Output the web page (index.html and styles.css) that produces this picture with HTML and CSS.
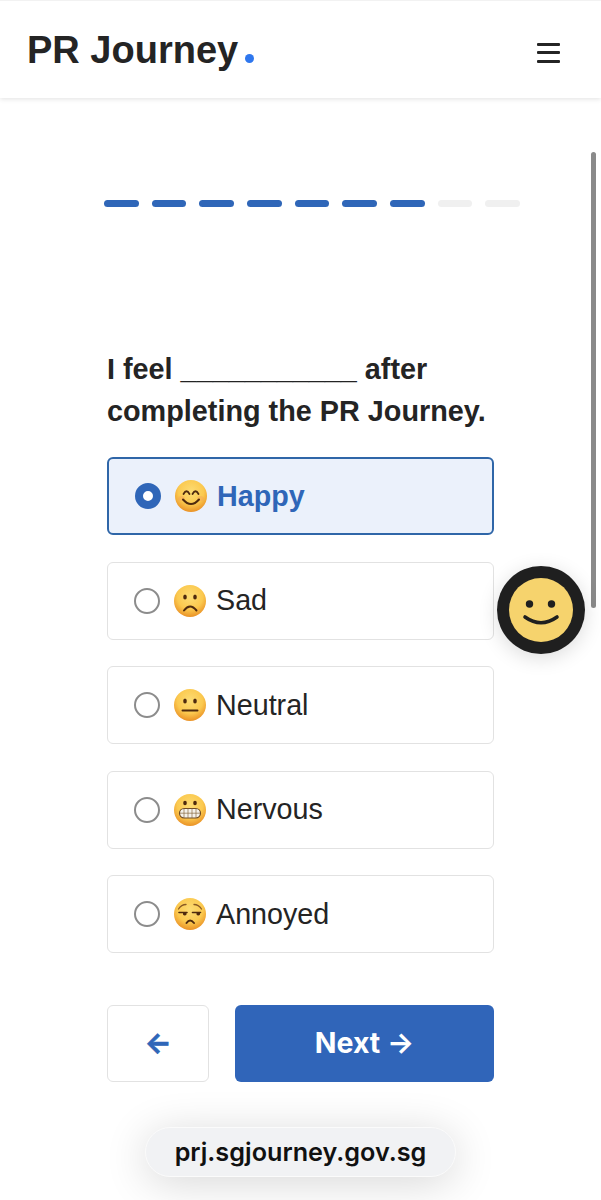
FILE: index.html
```html
<!DOCTYPE html>
<html lang="en">

<head>
  <meta charset="UTF-8">
  <meta name="viewport" content="width=device-width, initial-scale=1.0">
  <title>PR Journey</title>
  <link rel="stylesheet" href="styles.css">
</head>

<body>
  <svg class="defs" width="0" height="0" aria-hidden="true">
    <defs>
      <radialGradient id="face" cx="50%" cy="36%" r="64%">
        <stop offset="0" stop-color="#fcdc74" />
        <stop offset="0.62" stop-color="#fbc94f" />
        <stop offset="1" stop-color="#ea9226" />
      </radialGradient>
    </defs>
  </svg>

  <header class="topbar">
    <div class="logo">PR Journey<span class="logo-dot"></span></div>
    <div class="burger"><span></span><span></span><span></span></div>
  </header>

  <main class="content">
    <div class="progress">
      <span class="step done"></span>
      <span class="step done"></span>
      <span class="step done"></span>
      <span class="step done"></span>
      <span class="step done"></span>
      <span class="step done"></span>
      <span class="step done"></span>
      <span class="step"></span>
      <span class="step"></span>
    </div>

    <h1 class="question">I feel ___________ after completing the PR Journey.</h1>

    <div class="options">
      <label class="option selected">
        <span class="radio"></span>
        <svg class="emoji" viewBox="0 0 32 32">
          <circle cx="16" cy="16" r="16" fill="url(#face)" />
          <ellipse cx="6.500" cy="18.500" rx="3.500" ry="2.500" fill="#f5a35c" opacity="0.450" />
          <ellipse cx="25.500" cy="18.500" rx="3.500" ry="2.500" fill="#f5a35c" opacity="0.450" />
          <path d="M8.500 14q3-5.500 6 0M17.500 14q3-5.500 6 0" fill="none" stroke="#4e2a0e" stroke-width="1.800" stroke-linecap="round" />
          <path d="M8 19.500q8 9 16 0" fill="none" stroke="#4e2a0e" stroke-width="2" stroke-linecap="round" />
        </svg>
        <span>Happy</span>
      </label>
      <label class="option">
        <span class="radio"></span>
        <svg class="emoji" viewBox="0 0 32 32">
          <circle cx="16" cy="16" r="16" fill="url(#face)" />
          <ellipse cx="11" cy="12" rx="1.800" ry="2.500" fill="#4e2a0e" />
          <ellipse cx="21" cy="12" rx="1.800" ry="2.500" fill="#4e2a0e" />
          <path d="M10 25.500q6-8 12.500 0" fill="none" stroke="#4e2a0e" stroke-width="2" stroke-linecap="round" />
        </svg>
        <span>Sad</span>
      </label>
      <label class="option">
        <span class="radio"></span>
        <svg class="emoji" viewBox="0 0 32 32">
          <circle cx="16" cy="16" r="16" fill="url(#face)" />
          <ellipse cx="11" cy="12" rx="1.800" ry="2.500" fill="#4e2a0e" />
          <ellipse cx="21" cy="12" rx="1.800" ry="2.500" fill="#4e2a0e" />
          <path d="M8.500 21.500h15" fill="none" stroke="#4e2a0e" stroke-width="2" stroke-linecap="round" />
        </svg>
        <span>Neutral</span>
      </label>
      <label class="option">
        <span class="radio"></span>
        <svg class="emoji" viewBox="0 0 32 32">
          <circle cx="16" cy="16" r="16" fill="url(#face)" />
          <ellipse cx="11" cy="9" rx="1.800" ry="2.200" fill="#4e2a0e" />
          <ellipse cx="21" cy="9" rx="1.800" ry="2.200" fill="#4e2a0e" />
          <rect x="5.500" y="14.500" width="21" height="9.500" rx="4.700" fill="#f4f1ea" stroke="#6e4a24" stroke-width="1.200" />
          <path d="M6 19.200h20M10 14.500v9.500M14 14.500v9.500M18 14.500v9.500M22 14.500v9.500" fill="none" stroke="#8a6a42" stroke-width="0.700" />
        </svg>
        <span>Nervous</span>
      </label>
      <label class="option">
        <span class="radio"></span>
        <svg class="emoji" viewBox="0 0 32 32">
          <circle cx="16" cy="16" r="16" fill="url(#face)" />
          <path d="M4.500 11q3-4.500 7.500-4.500M20 6.500q4.500 0 7.500 4.500" fill="none" stroke="#8a5a24" stroke-width="1.300" stroke-linecap="round" />
          <path d="M5 14.500h8M18.500 14.500h8" fill="none" stroke="#4e2a0e" stroke-width="1.600" stroke-linecap="round" />
          <path d="M9 15v1.500a2 2 0 0 0 3.500 0v-1.500zM22.500 15v1.500a2 2 0 0 0 3.500 0v-1.500z" fill="#4e2a0e" />
          <path d="M12.500 25q3.500-5 7.500 0" fill="none" stroke="#4e2a0e" stroke-width="2" stroke-linecap="round" />
        </svg>
        <span>Annoyed</span>
      </label>
    </div>

    <div class="actions">
      <button class="btn-back" type="button">←</button>
      <button class="btn-next" type="button">Next →</button>
    </div>
  </main>

  <div class="scroll-thumb"></div>

  <button class="feedback" type="button">
    <svg viewBox="0 0 64 64" width="64" height="64">
      <circle cx="32" cy="32" r="32" fill="#f6d36d" />
      <circle cx="20.500" cy="26" r="3.700" fill="#1f1f1f" />
      <circle cx="42.500" cy="26" r="3.700" fill="#1f1f1f" />
      <path d="M16 39q16 11.500 32 0" fill="none" stroke="#1f1f1f" stroke-width="3.600" stroke-linecap="round" />
    </svg>
  </button>

  <div class="url-pill">prj.sgjourney.gov.sg</div>
</body>

</html>
```

FILE: styles.css
```css
* {
  box-sizing: border-box;
}

html,
body {
  height: 1200px;
  overflow: hidden;
}

body {
  margin: 0;
  padding: 0;
  background: #ffffff;
  color: #242424;
  font-family: "Liberation Sans", Arial, sans-serif;
}

.defs {
  position: absolute;
}

.topbar {
  height: 98px;
  padding: 0 41px 0 27px;
  display: flex;
  justify-content: space-between;
  align-items: center;
  border-top: 1px solid #f2f2f2;
  box-shadow: 0 1px 5px rgba(0, 0, 0, 0.12);
}

.logo {
  font-size: 38px;
  font-weight: 700;
  line-height: 44px;
}

.logo-dot {
  display: inline-block;
  width: 9px;
  height: 9px;
  margin-left: 7px;
  border-radius: 50%;
  background: #2f77ee;
}

.burger {
  width: 23px;
  display: flex;
  flex-direction: column;
  gap: 5.500px;
  margin-top: 6px;
}

.burger span {
  height: 3px;
  border-radius: 1px;
  background: #242424;
}

.content {
  padding: 102px 107px 0;
}

.progress {
  width: 416px;
  margin-left: -3px;
  display: flex;
  gap: 13px;
}

.step {
  flex: 1;
  height: 7px;
  border-radius: 4px;
  background: #f0f0f0;
}

.step.done {
  background: #2f66b8;
}

.question {
  margin: 141px 0 0;
  font-size: 28.800px;
  font-weight: 700;
  line-height: 42px;
}

.options {
  margin-top: 25px;
  display: flex;
  flex-direction: column;
  gap: 26.500px;
}

.option {
  height: 78px;
  padding-left: 26px;
  display: flex;
  align-items: center;
  border: 1.500px solid #e2e2e2;
  border-radius: 6px;
  font-size: 28.700px;
}

.option.selected {
  border: 2px solid #2f66a8;
  background: #ebf1fb;
  color: #2f66b8;
  font-weight: 700;
}

.radio {
  width: 26px;
  height: 26px;
  border: 2.500px solid #8c8c8c;
  border-radius: 50%;
  background: #ffffff;
}

.selected .radio {
  border: 8px solid #2f66b8;
}

.emoji {
  width: 32px;
  height: 32px;
  margin: 0 10px 0 14px;
}

.actions {
  margin-top: 52px;
  display: flex;
  gap: 26px;
}

.actions button {
  height: 77px;
  padding-bottom: 3px;
  border-radius: 6px;
  font-family: Inter, "Liberation Sans", sans-serif;
  font-size: 28.500px;
  font-weight: 700;
}

.btn-back {
  width: 102px;
  border: 1.500px solid #e2e2e2;
  background: #ffffff;
  color: #2f66b8;
  -webkit-text-stroke: 0.6px #2f66b8;
}

.btn-next {
  flex: 1;
  border: none;
  background: #3065b9;
  color: #ffffff;
}

.scroll-thumb {
  position: absolute;
  left: 591px;
  top: 152px;
  width: 5px;
  height: 456px;
  border-radius: 3px;
  background: #8a8a8a;
}

.feedback {
  position: absolute;
  left: 497px;
  top: 566px;
  width: 88px;
  height: 88px;
  padding: 0;
  display: flex;
  justify-content: center;
  align-items: center;
  border: none;
  border-radius: 50%;
  background: #1f1f1f;
  box-shadow: 0 4px 20px rgba(0, 0, 0, 0.14);
}

.url-pill {
  position: absolute;
  left: 145px;
  top: 1127px;
  width: 311px;
  height: 50px;
  display: flex;
  justify-content: center;
  align-items: center;
  border: 1.500px solid #fbfbfb;
  border-radius: 25px;
  background: #f1f2f4;
  box-shadow: 0 6px 44px rgba(0, 0, 0, 0.16);
  color: #111111;
  font-family: Inter, "Liberation Sans", sans-serif;
  font-size: 25.200px;
  font-weight: 600;
}
```
